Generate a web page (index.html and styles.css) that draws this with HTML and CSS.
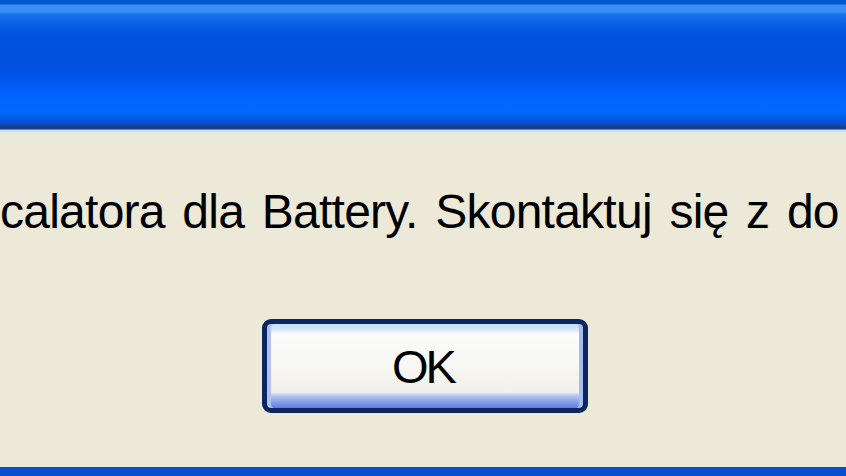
FILE: index.html
```html
<!DOCTYPE html>
<html lang="pl">
<head>
<meta charset="utf-8">
<title>Dialog</title>
<link rel="stylesheet" href="styles.css">
</head>
<body>
<div class="window">
  <div class="titlebar"></div>
  <div class="client">
    <p class="message">calatora dla Battery. Skontaktuj się z do</p>
    <div class="actions">
      <button class="btn" type="button"><span>OK</span></button>
    </div>
  </div>
  <div class="bottom"></div>
</div>
</body>
</html>
```

FILE: styles.css
```css
html, body {
  margin: 0;
  padding: 0;
  width: 846px;
  height: 476px;
  overflow: hidden;
  background: #ece9d8;
}

.window {
  display: flex;
  flex-direction: column;
  height: 476px;
}

.titlebar {
  height: 134px;
  flex: none;
  background: linear-gradient(to bottom,
    #0058d0 0px, #0058d0 4px,
    #3a8ef4 5px, #3a8ef4 12px,
    #1a74ee 14px, #0c64e6 22px,
    #0054e2 32px, #0050dc 60px,
    #0054e6 75px, #005cfa 88px,
    #0067ff 100px, #0068fc 112px,
    #005ee8 118px, #0a4cc4 124px,
    #1c3c8c 127px, #1c3c8c 129px,
    #b8d2ee 130px, #d4e2ea 131px,
    #e4e8e0 133px, #ece9d8 134px);
}

.client {
  flex: 1;
  display: flex;
  flex-direction: column;
  background: #ece9d8;
  overflow: hidden;
}

.message {
  margin: 48px 0 0 0;
  white-space: nowrap;
  font-family: "Liberation Sans", Arial, sans-serif;
  font-size: 48px;
  line-height: 60px;
  color: #000;
  letter-spacing: -0.75px;
  word-spacing: 5px;
}

.actions {
  display: flex;
  justify-content: flex-start;
  padding: 77px 0 0 262px;
}

.btn {
  width: 326px;
  height: 94px;
  padding: 0;
  border: 5px solid #0c2660;
  border-radius: 9px;
  background:
    linear-gradient(to bottom,
      #c6dcf6 0px, #d8e8f8 6px,
      #fbfcfb 10px, #f8f8f4 40px,
      #f1f0ea 68px, #b4c6f0 72px,
      #8ea6ea 77px, #5c7ee2 84px);
  box-shadow: inset 5px 0 0 -1px #b4c0f2, inset -5px 0 0 -1px #a8bcf0;
  font-family: "Liberation Sans", Arial, sans-serif;
  font-size: 47px;
  color: #000;
  display: flex;
  align-items: center;
  justify-content: center;
}

.btn span {
  display: block;
  margin: 0 4px 0 0;
  letter-spacing: -3px;
}

.bottom {
  height: 9px;
  flex: none;
  background: linear-gradient(to bottom, #0a4fc6, #0650d8);
}
```
